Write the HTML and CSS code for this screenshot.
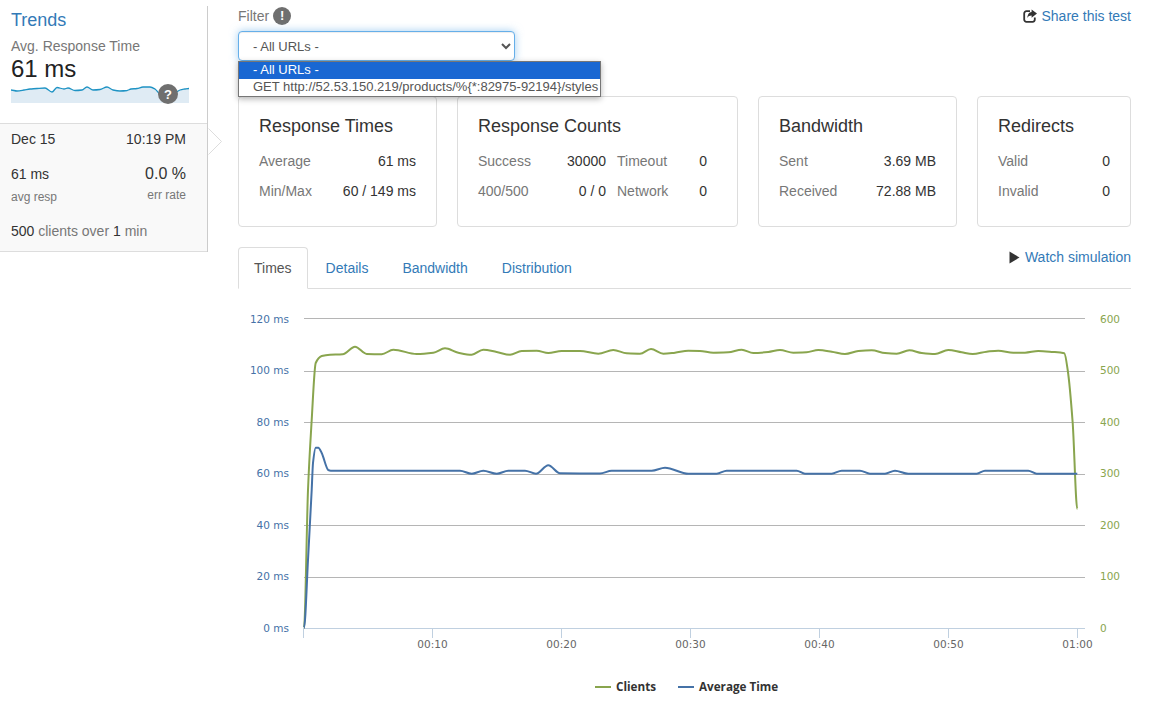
FILE: index.html
```html
<!DOCTYPE html>
<html>
<head>
    <meta charset="UTF-8">
    <title>Test results</title>
    <link rel="stylesheet" href="styles.css">
</head>
<body>
<div class="page">
    <div class="sidebar">
        <div class="trends">
            <a class="trends-title">Trends</a>
            <div class="trends-label">Avg. Response Time</div>
            <div class="trends-value">61 ms</div>
            <svg class="spark" width="178" height="20" viewBox="11 84 178 20">
                <path id="sparkFill" fill="#dfebf4"></path>
                <path id="sparkLine" fill="none" stroke="#1f93c4" stroke-width="1.3"></path>
                <circle cx="168" cy="94" r="10" fill="#6f6f6f"></circle>
                <text x="168" y="98.5" class="spark-q">?</text>
            </svg>
        </div>
        <div class="run">
            <svg class="run-arrow" width="15" height="27" viewBox="0 0 15 27">
                <path d="M0.5 0.5L13.5 13.5 0.5 26.5" fill="#ffffff" stroke="#dddddd"></path>
            </svg>
            <div class="run-row run-date"><span>Dec 15</span><span>10:19 PM</span></div>
            <div class="run-row run-nums"><span>61 ms</span><span class="run-big">0.0 %</span></div>
            <div class="run-row run-small"><span>avg resp</span><span class="run-err">err rate</span></div>
            <div class="run-foot"><b>500</b> clients over <b>1</b> min</div>
        </div>
    </div>

    <div class="main">
        <div class="top">
            <div>
                <div class="filter-label">Filter <span class="badge">!</span></div>
                <div class="filter-wrap">
                    <select class="filter-select"><option>- All URLs -</option></select>
                    <div class="filter-menu">
                        <div class="filter-opt selected">- All URLs -</div>
                        <div class="filter-opt">GET http://52.53.150.219/products/%{*:82975-92194}/styles</div>
                    </div>
                </div>
            </div>
            <a class="link share">
                <svg width="14" height="14" viewBox="0 0 14 14">
                    <path d="M7 2.2H3.4A2.2 2.2 0 0 0 1.2 4.4v6.2a2.2 2.2 0 0 0 2.2 2.2h6.2a2.2 2.2 0 0 0 2.2-2.2V8.6" fill="none" stroke="#333" stroke-width="1.8"></path>
                    <path d="M8.6 0.4L14 4.6 8.6 8.8V6.4C6.6 6.4 5.2 7 4.4 9 4.4 5.6 6 3.2 8.6 3Z" fill="#333"></path>
                </svg>
                Share this test
            </a>
        </div>

        <div class="cards">
            <div class="card card-times">
                <h3>Response Times</h3>
                <div class="stats">
                    <span>Average</span><b>61 ms</b>
                    <span>Min/Max</span><b>60 / 149 ms</b>
                </div>
            </div>
            <div class="card card-counts">
                <h3>Response Counts</h3>
                <div class="stats stats-four">
                    <span>Success</span><b>30000</b><span>Timeout</span><b>0</b>
                    <span>400/500</span><b>0 / 0</b><span>Network</span><b>0</b>
                </div>
            </div>
            <div class="card card-band">
                <h3>Bandwidth</h3>
                <div class="stats">
                    <span>Sent</span><b>3.69 MB</b>
                    <span>Received</span><b>72.88 MB</b>
                </div>
            </div>
            <div class="card card-redir">
                <h3>Redirects</h3>
                <div class="stats">
                    <span>Valid</span><b>0</b>
                    <span>Invalid</span><b>0</b>
                </div>
            </div>
        </div>

        <div class="tabs">
            <a class="tab active">Times</a>
            <a class="tab">Details</a>
            <a class="tab">Bandwidth</a>
            <a class="tab">Distribution</a>
            <a class="link watch">
                <svg width="11" height="13" viewBox="0 0 11 13"><path d="M0.5 0.5L10.5 6.5 0.5 12.5Z" fill="#333"></path></svg>
                Watch simulation
            </a>
        </div>

        <svg class="chart" width="893" height="420" viewBox="238 289 893 420">
            <g class="grid">
                <line x1="304" x2="1085" y1="318.5" y2="318.5"></line>
                <line x1="304" x2="1085" y1="371.5" y2="371.5"></line>
                <line x1="304" x2="1085" y1="422.5" y2="422.5"></line>
                <line x1="304" x2="1085" y1="474.5" y2="474.5"></line>
                <line x1="304" x2="1085" y1="525.5" y2="525.5"></line>
                <line x1="304" x2="1085" y1="577.5" y2="577.5"></line>
            </g>
            <g class="axis">
                <line x1="304" x2="1085" y1="628.5" y2="628.5"></line>
                <line x1="303.5" x2="303.5" y1="628" y2="638"></line>
                <line x1="432.5" x2="432.5" y1="628" y2="638"></line>
                <line x1="561.5" x2="561.5" y1="628" y2="638"></line>
                <line x1="690.5" x2="690.5" y1="628" y2="638"></line>
                <line x1="819.5" x2="819.5" y1="628" y2="638"></line>
                <line x1="948.5" x2="948.5" y1="628" y2="638"></line>
                <line x1="1077.5" x2="1077.5" y1="628" y2="638"></line>
            </g>
            <g class="labels-left">
                <text x="289" y="323">120 ms</text>
                <text x="289" y="374">100 ms</text>
                <text x="289" y="426">80 ms</text>
                <text x="289" y="477">60 ms</text>
                <text x="289" y="529">40 ms</text>
                <text x="289" y="580">20 ms</text>
                <text x="289" y="632">0 ms</text>
            </g>
            <g class="labels-right">
                <text x="1100" y="323">600</text>
                <text x="1100" y="374">500</text>
                <text x="1100" y="426">400</text>
                <text x="1100" y="477">300</text>
                <text x="1100" y="529">200</text>
                <text x="1100" y="580">100</text>
                <text x="1100" y="632">0</text>
            </g>
            <g class="labels-x">
                <text x="432.5" y="648">00:10</text>
                <text x="561.5" y="648">00:20</text>
                <text x="690.5" y="648">00:30</text>
                <text x="819.5" y="648">00:40</text>
                <text x="948.5" y="648">00:50</text>
                <text x="1077.5" y="648">01:00</text>
            </g>
            <path id="lineClients" class="line" stroke="#89a54e"></path>
            <path id="lineAverage" class="line" stroke="#4572a7"></path>
            <g class="legend">
                <line x1="595" x2="611" y1="687" y2="687" stroke="#89a54e"></line>
                <text x="616" y="691">Clients</text>
                <line x1="678" x2="694" y1="687" y2="687" stroke="#4572a7"></line>
                <text x="699" y="691">Average Time</text>
            </g>
        </svg>
    </div>
</div>
<script src="chart.js"></script>
</body>
</html>
```

FILE: styles.css
```css
html, body
{
    margin: 0;
    padding: 0;
    background-color: #ffffff;
    font-family: "Liberation Sans", Arial, sans-serif;
    font-size: 14px;
    line-height: 20px;
    color: #333333;
}

.page
{
    display: flex;
    align-items: flex-start;
}

.link
{
    color: #337ab7;
}

/* left column */
.sidebar
{
    width: 207px;
    flex-shrink: 0;
    margin-top: 6px;
    border-right: 1px solid #cccccc;
}

.trends
{
    height: 117px;
    padding-left: 11px;
    box-sizing: border-box;
}

.trends-title
{
    display: block;
    padding-top: 4px;
    font-size: 18px;
    color: #337ab7;
}

.trends-label
{
    margin-top: 6px;
    color: #777777;
}

.trends-value
{
    font-size: 24px;
    line-height: 26px;
    color: #222222;
}

.spark
{
    display: block;
    margin-top: 2px;
}

.spark-q
{
    font-size: 13px;
    font-weight: bold;
    fill: #ffffff;
    text-anchor: middle;
}

.run
{
    position: relative;
    height: 129px;
    box-sizing: border-box;
    padding: 5px 21px 0 11px;
    background-color: #f9f9f9;
    border-top: 1px solid #dddddd;
    border-bottom: 1px solid #dddddd;
}

.run-arrow
{
    position: absolute;
    top: 4px;
    left: 208px;
}

.run-row
{
    display: flex;
    justify-content: space-between;
}

.run-nums
{
    margin-top: 15px;
}

.run-big
{
    font-size: 16px;
}

.run-small
{
    margin-top: 3px;
    font-size: 12px;
    color: #777777;
}

.run-err
{
    margin-top: -2px;
}

.run-foot
{
    margin-top: 14px;
    color: #777777;
}

.run-foot b
{
    font-weight: normal;
    color: #333333;
}

/* main column */
.main
{
    width: 893px;
    margin-left: 30px;
}

.top
{
    display: flex;
    justify-content: space-between;
    padding-top: 6px;
}

.filter-label
{
    display: flex;
    align-items: center;
    gap: 4px;
    color: #777777;
}

.badge
{
    width: 18px;
    height: 18px;
    border-radius: 50%;
    background-color: #6f6f6f;
    color: #ffffff;
    font-size: 13px;
    font-weight: bold;
    line-height: 18px;
    text-align: center;
}

.filter-wrap
{
    position: relative;
    margin-top: 5px;
}

.filter-select
{
    display: block;
    width: 277px;
    height: 30px;
    padding: 0 10px;
    font-family: "Liberation Sans", Arial, sans-serif;
    font-size: 13px;
    color: #555555;
    background-color: #ffffff;
    border: 1px solid #66afe9;
    border-radius: 4px;
    outline: none;
    box-shadow: inset 0 1px 1px rgba(0, 0, 0, 0.075), 0 0 8px rgba(102, 175, 233, 0.6);
}

.filter-menu
{
    position: absolute;
    top: 30px;
    left: 0;
    z-index: 5;
    border: 1px solid #767676;
    background-color: #ffffff;
    box-shadow: 0 2px 6px rgba(0, 0, 0, 0.3);
}

.filter-opt
{
    height: 17px;
    padding: 0 2px 0 14px;
    font-size: 13px;
    line-height: 16px;
    color: #555555;
    white-space: nowrap;
}

.filter-opt.selected
{
    background-color: #1967d2;
    color: #ffffff;
}

.share
{
    display: flex;
    align-items: center;
    gap: 5px;
    height: 20px;
}

/* stat cards */
.cards
{
    display: flex;
    gap: 20px;
    margin-top: 35px;
}

.card
{
    height: 131px;
    box-sizing: border-box;
    padding: 19px 20px 0 20px;
    border: 1px solid #dddddd;
    border-radius: 4px;
}

.card h3
{
    margin: 0 0 15px 0;
    font-size: 18px;
    font-weight: normal;
    line-height: 20px;
    color: #333333;
}

.card-times
{
    width: 199px;
}

.card-counts
{
    width: 281px;
    padding-right: 30px;
}

.card-band
{
    width: 199px;
}

.card-redir
{
    width: 154px;
}

.stats
{
    display: grid;
    grid-template-columns: 1fr auto;
    row-gap: 10px;
    color: #777777;
}

.stats-four
{
    grid-template-columns: 70px 47px 60px 19px;
    column-gap: 11px;
}

.stats b
{
    font-weight: normal;
    text-align: right;
    color: #333333;
}

/* tabs */
.tabs
{
    display: flex;
    gap: 2px;
    height: 42px;
    box-sizing: border-box;
    margin-top: 20px;
    border-bottom: 1px solid #dddddd;
}

.tab
{
    height: 42px;
    box-sizing: border-box;
    padding: 10px 15px;
    border: 1px solid transparent;
    border-radius: 4px 4px 0 0;
    color: #337ab7;
}

.tab.active
{
    color: #555555;
    background-color: #ffffff;
    border-color: #dddddd #dddddd #ffffff #dddddd;
}

.watch
{
    display: flex;
    align-items: center;
    gap: 5px;
    height: 20px;
    margin-left: auto;
}

/* chart */
.chart
{
    display: block;
}

.chart text
{
    font-family: "DejaVu Sans", Verdana, sans-serif;
    font-size: 10.5px;
}

.grid line
{
    stroke: #b5b5b5;
    stroke-width: 1;
}

.axis line
{
    stroke: #c0d0e0;
    stroke-width: 1;
}

.labels-left text
{
    fill: #4572a7;
    text-anchor: end;
}

.labels-right text
{
    fill: #89a54e;
}

.labels-x text
{
    fill: #666666;
    text-anchor: middle;
}

.line
{
    fill: none;
    stroke-width: 2;
    stroke-linejoin: round;
}

.legend line
{
    stroke-width: 2;
}

.chart .legend text
{
    font-family: "Open Sans", sans-serif;
    font-size: 11.7px;
    font-weight: 700;
    fill: #333333;
}
```

FILE: chart.js
```js
var clients = [
    [304,628],[308,490],[311.7,420],[315.7,363],[321.7,356],[330,354.7],[342.7,354.3],[355,346.7],[366.7,354],
    [381.7,354.3],[393.3,349.7],[416.7,354],[433.3,352.7],[445,348.3],[458.3,352.7],[471.7,354.7],[483.3,349.7],
    [496.7,352],[510,354.7],[521.7,351],[536.7,350.7],[548.3,353],[561.7,351],[580,351],[598.3,353.7],[613.3,350],
    [626.7,353.3],[640,353.7],[651,349],[663.3,353.7],[675,352.7],[688.3,350.7],[700,351],[713.3,352.7],[728.3,352.3],
    [741.7,349.7],[753.3,353],[768.3,352],[780,350],[793.3,352.7],[806.7,352.3],[818.3,350],[831.7,351.7],[845,354],
    [858.3,351],[871.7,350.3],[885,353],[896.7,353.7],[909.3,350.3],[921.7,353],[935,354],[948.3,350],[961.7,352.3],
    [972.7,354],[986.7,351.7],[998.3,350.7],[1013.3,352.7],[1025,352.7],[1038.3,351],[1053.3,352],[1064.3,353.3],
    [1067.7,370],[1072.7,423],[1077.3,509]
];

var average = [
    [304,628],[308,560],[311.7,490],[313,463],[315.7,447.7],[318.3,447.7],[321.7,453],[328.3,470],[330.7,470.7],
    [460,470.7],[471.7,473.7],[483.3,470.7],[496.7,473.7],[508.3,470.7],[525,470.7],[536,473.7],[548.3,465.3],
    [560,473.3],[600,473.5],[611.7,470.7],[651.7,470.7],[665,467.7],[688.3,473.7],[716.7,473.7],[726.7,470.7],
    [796.7,470.7],[805,473.7],[831.7,473.7],[841.7,470.7],[860,470.7],[870,473.7],[885,473.7],[895,470.7],
    [908.3,473.7],[976.7,473.7],[985,470.7],[1028.3,470.7],[1036.7,473.7],[1077.3,473.7]
];

var spark = [
    [11,90],[17,91],[24,90],[30,89],[37,88.5],[45,88],[52,92],[57,87.5],[64,89],[68,88],[75,90.5],[82,90],[87,87],
    [93,90],[100,89.5],[107,87],[113,90],[120,91],[127,90.5],[131,89],[137,88.5],[143,87],[150,87],[155,89],[160,94],
    [170,96],[180,90],[185,89],[189,88.5]
];

// monotone cubic through the points, so flat runs stay flat and peaks don't overshoot
function smooth(points)
{
    var slopes = [];
    for (var i = 0; i < points.length; i++) {
        var before = i > 0 ? (points[i][1] - points[i - 1][1]) / (points[i][0] - points[i - 1][0]) : 0;
        var after = i < points.length - 1 ? (points[i + 1][1] - points[i][1]) / (points[i + 1][0] - points[i][0]) : 0;
        slopes.push(before * after > 0 ? 2 * before * after / (before + after) : 0);
    }

    var d = "M" + points[0][0] + " " + points[0][1];
    for (var j = 0; j < points.length - 1; j++) {
        var a = points[j];
        var b = points[j + 1];
        var dx = (b[0] - a[0]) / 3;
        d += " C" + (a[0] + dx).toFixed(1) + " " + (a[1] + slopes[j] * dx).toFixed(1)
           + " " + (b[0] - dx).toFixed(1) + " " + (b[1] - slopes[j + 1] * dx).toFixed(1)
           + " " + b[0] + " " + b[1];
    }
    return d;
}

document.getElementById("lineClients").setAttribute("d", smooth(clients));
document.getElementById("lineAverage").setAttribute("d", smooth(average));

var sparkPath = smooth(spark);
document.getElementById("sparkLine").setAttribute("d", sparkPath);
document.getElementById("sparkFill").setAttribute("d", sparkPath + " L189 103 L11 103 Z");
```
